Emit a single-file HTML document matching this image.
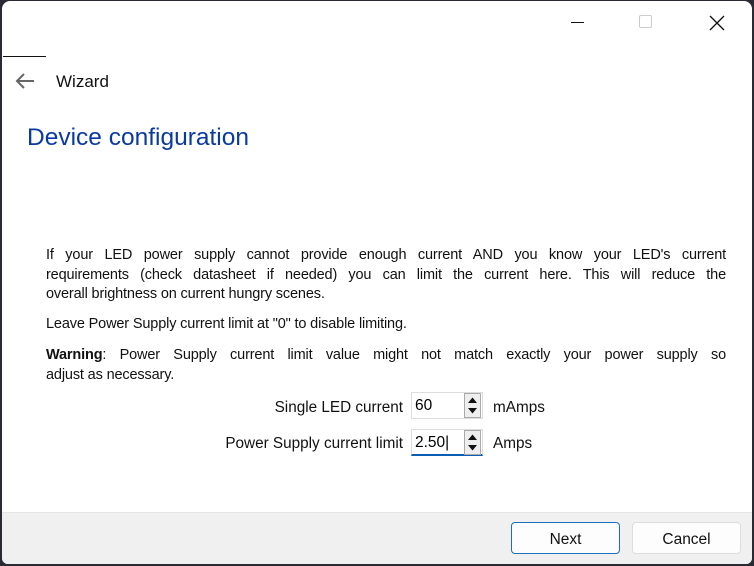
<!DOCTYPE html>
<html><head><style>
body{margin:0;width:754px;height:566px;background:#2a2a35;position:relative;overflow:hidden;font-family:"Liberation Sans",sans-serif;}
.win{position:absolute;left:2px;top:1px;width:750px;height:563px;background:#fff;border-radius:8px 8px 6px 6px;overflow:hidden;}
.abs{position:absolute;}
.txt{position:absolute;left:44px;width:680px;font-size:14.5px;line-height:19.5px;color:#111;letter-spacing:-0.15px;}
.txt div{text-align:justify;text-align-last:justify;white-space:nowrap;}
.txt div.l{text-align-last:left;}
.spin{position:absolute;width:72px;height:27px;border:1px solid #ddd;box-sizing:border-box;background:#fff;font-size:15.5px;}
.spin span{position:absolute;left:3px;top:4px;}
.arr{position:absolute;right:1px;top:0px;width:17px;height:25px;border:1px solid #aaa;background:#eee;box-sizing:border-box;}
.btn{position:absolute;top:521px;width:109px;height:32px;border:1px solid #ddd;border-radius:4px;box-sizing:border-box;background:#fdfdfd;font-size:15.5px;text-align:center;line-height:33px;color:#111;}
</style></head><body>
<div class="win">
<div class="abs" style="top:21px;width:13px;height:1px;background:#111;left:569px"></div>
<div class="abs" style="left:637px;top:14px;width:13px;height:13px;border:1px solid #ccc;border-radius:2px;box-sizing:border-box"></div>
<svg class="abs" style="left:707px;top:14px" width="16" height="16"><path d="M1 1L15 15M15 1L1 15" stroke="#111" stroke-width="1.3"/></svg>
<div class="abs" style="left:1px;top:55px;width:43px;height:1px;background:#111"></div>
<svg class="abs" style="left:13px;top:72px" width="20" height="16"><path d="M19 8H2M9 1L2 8L9 15" stroke="#666" stroke-width="2" fill="none"/></svg>
<div class="abs" style="left:54px;top:71px;font-size:17px;color:#111">Wizard</div>
<div class="abs" style="left:25px;top:123px;font-size:24.5px;color:#0a3aa0">Device configuration</div>
<div class="txt" style="top:245px"><div>If your LED power supply cannot provide enough current AND you know your LED's current</div><div>requirements (check datasheet if needed) you can limit the current here. This will reduce the</div><div class="l">overall brightness on current hungry scenes.</div></div>
<div class="txt" style="top:314px"><div class="l">Leave Power Supply current limit at "0" to disable limiting.</div></div>
<div class="txt" style="top:345px"><div><b>Warning</b>: Power Supply current limit value might not match exactly your power supply so</div><div class="l">adjust as necessary.</div></div>
<div class="abs" style="right:349px;top:398px;font-size:15.3px;color:#111">Single LED current</div>
<div class="abs" style="right:349px;top:434px;font-size:15.3px;color:#111">Power Supply current limit</div>
<div class="spin" style="left:409px;top:391px"><span>60</span><div class="arr"><svg width="15" height="23"><path d="M3 9L7.5 3.5L12 9ZM3 14L7.5 19.5L12 14Z" fill="#111"/></svg></div></div>
<div class="spin" style="left:409px;top:428px;border-bottom:2px solid #0a5fb4"><span>2.50|</span><div class="arr"><svg width="15" height="23"><path d="M3 9L7.5 3.5L12 9ZM3 14L7.5 19.5L12 14Z" fill="#111"/></svg></div></div>
<div class="abs" style="left:491px;top:398px;font-size:15.3px;color:#111">mAmps</div>
<div class="abs" style="left:491px;top:434px;font-size:15.3px;color:#111">Amps</div>
<div class="abs" style="left:0;top:511px;width:750px;height:60px;background:#f0f0f0;border-top:1px solid #e5e5e5"></div>
<div class="btn" style="left:509px;border-color:#1a6fc0">Next</div>
<div class="btn" style="left:630px">Cancel</div>
</div>
</body></html>
